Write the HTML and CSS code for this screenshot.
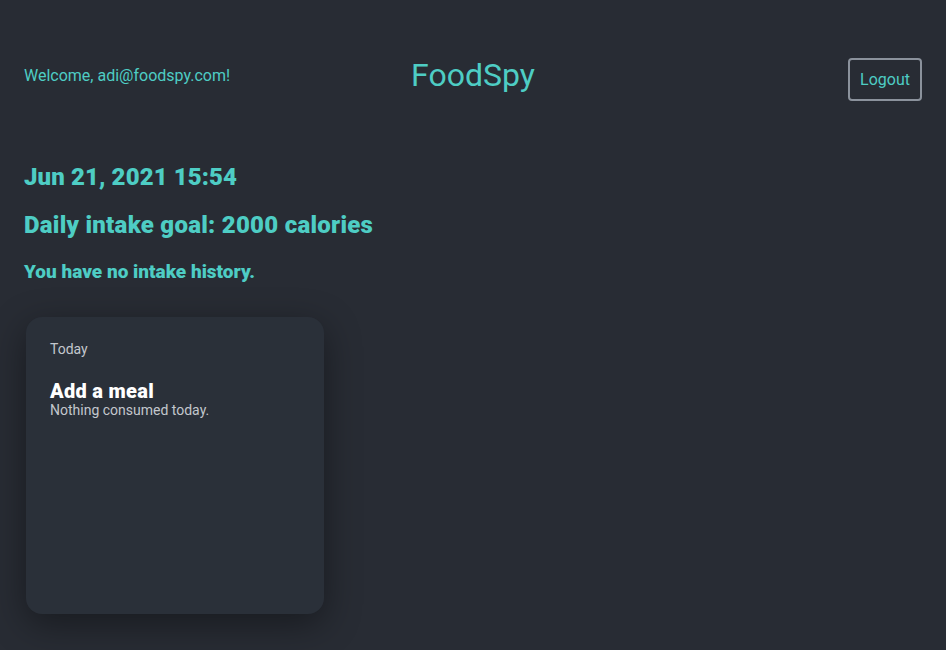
FILE: index.html
```html
<!DOCTYPE html>
<html>
<head>
<meta charset="utf-8">
<link rel="stylesheet" href="styles.css">
</head>
<body>
<div class="page">
  <header class="header">
    <div class="welcome">Welcome, adi@foodspy.com!</div>
    <div class="title">FoodSpy</div>
    <div class="right"><button class="logout">Logout</button></div>
  </header>
  <main class="main">
    <h2 class="date">Jun 21, 2021 15:54</h2>
    <h2 class="goal">Daily intake goal: 2000 calories</h2>
    <h3 class="history">You have no intake history.</h3>
    <div class="card">
      <div class="card-label">Today</div>
      <div class="card-title">Add a meal</div>
      <div class="card-text">Nothing consumed today.</div>
    </div>
  </main>
</div>
</body>
</html>
```
FILE: styles.css
```css
html, body {
  margin: 0;
  padding: 0;
  background: #282c34;
  font-family: Roboto, "Liberation Sans", sans-serif;
  color: #4ecdc4;
  height: 100%;
}
.page {
  padding: 56px 24px 0 24px;
}
.header {
  display: grid;
  grid-template-columns: 1fr auto 1fr;
  align-items: center;
  height: 42px;
}
.welcome {
  font-size: 16px;
  margin-bottom: 8px;
}
.title {
  font-size: 32px;
  margin-bottom: 8px;
}
.right {
  display: flex;
  justify-content: flex-end;
}
.logout {
  font-family: Roboto, "Liberation Sans", sans-serif;
  font-size: 16px;
  color: #4ecdc4;
  background: transparent;
  border: 2px solid #8b929c;
  border-radius: 4px;
  height: 43px;
  width: 74px;
  padding: 0;
}
.main {
  padding-top: 65px;
}
.date, .goal {
  font-size: 24px;
  font-weight: 900;
  line-height: 28px;
  margin: 0;
}
.date {
  letter-spacing: 0.1px;
}
.goal {
  margin-top: 20px;
  letter-spacing: 0.26px;
}
.history {
  font-size: 19px;
  font-weight: 900;
  line-height: 22px;
  margin: 22px 0 0 0;
}
.card {
  margin: 34px 0 0 2px;
  width: 298px;
  height: 297px;
  box-sizing: border-box;
  padding: 24px;
  background: #2a3039;
  border-radius: 16px;
  box-shadow: 0 10px 36px rgba(0, 0, 0, 0.4);
}
.card-label {
  font-size: 14px;
  line-height: 16px;
  color: #c3c7cd;
}
.card-title {
  margin-top: 23px;
  font-size: 20px;
  font-weight: 900;
  line-height: 22px;
  letter-spacing: 0.3px;
  color: #ffffff;
}
.card-text {
  font-size: 14px;
  line-height: 16px;
  color: #c3c7cd;
}
```
